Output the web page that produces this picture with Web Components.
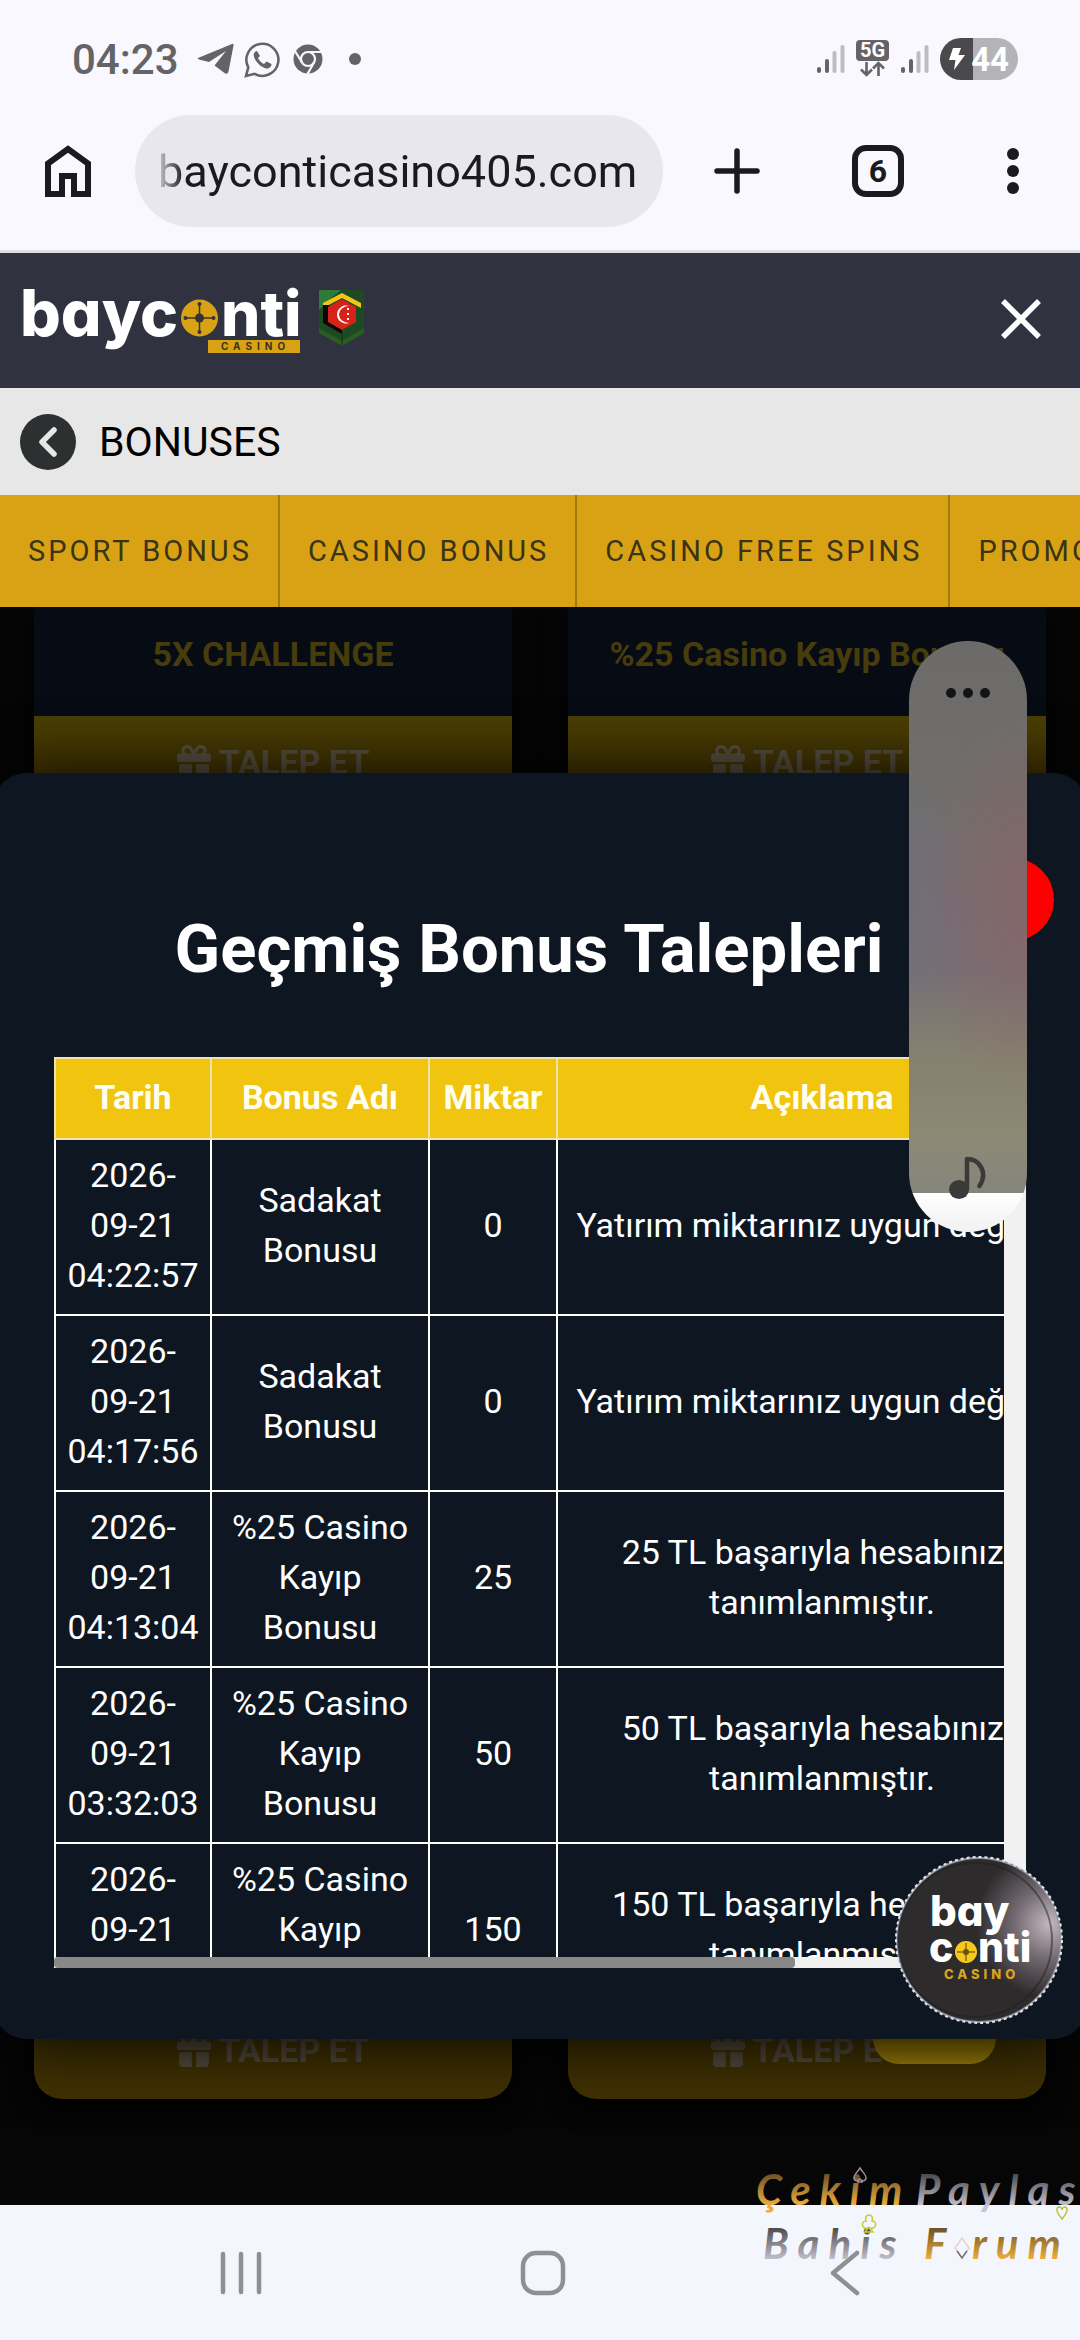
<!DOCTYPE html>
<html lang="tr">
<head>
<meta charset="utf-8">
<meta name="viewport" content="width=device-width, initial-scale=1">
<title>Bonuses</title>
<style>
html { height: 100%; }
body { margin: 0; min-height: 100%; display: flex; flex-direction: column; position: relative; overflow-x: hidden; font-family: Roboto, "Liberation Sans", sans-serif; background: #f4f6fd; }
bonus-page { flex: 1; }
</style>
</head>
<body>
<phone-status></phone-status>
<browser-bar></browser-bar>
<site-header></site-header>
<page-title>BONUSES</page-title>
<bonus-tabs>
  <a href="#sport">SPORT BONUS</a>
  <a href="#casino">CASINO BONUS</a>
  <a href="#spins">CASINO FREE SPINS</a>
  <a href="#promo">PROMOTIONS</a>
</bonus-tabs>
<bonus-page>
  <bonus-card>5X CHALLENGE</bonus-card>
  <bonus-card>%25 Casino Kayıp Bonusu</bonus-card>
  <bonus-card round></bonus-card>
  <bonus-card round></bonus-card>
  <bonus-history slot="modal"></bonus-history>
</bonus-page>
<nav-bar></nav-bar>
<volume-panel></volume-panel>
<chat-badge></chat-badge>
<forum-mark></forum-mark>

<script>
const base = `:host,*{box-sizing:border-box} button{border:0;background:none;padding:0;margin:0;font:inherit;color:inherit;display:flex;align-items:center;justify-content:center} svg{display:block}`;
function define(name, css, html) {
  const tpl = document.createElement('template');
  tpl.innerHTML = `<style>${base}${css}</style>${html}`;
  customElements.define(name, class extends HTMLElement {
    constructor() {
      super();
      this.attachShadow({ mode: 'open' }).append(tpl.content.cloneNode(true));
    }
  });
}

const signal = `<svg width="28" height="30" viewBox="0 0 28 30" stroke-width="4" stroke-linecap="round" fill="none"><path d="M2 25v2M10 17v10" stroke="#646467"/><path d="M17.500 9v18M25.500 3v24" stroke="#bcbcc1"/></svg>`;
define('phone-status', `
:host{display:flex;justify-content:space-between;align-items:center;height:115px;padding:3px 62px 0 72px;background:#f9f8fe;color:#646467}
div{display:flex;align-items:center}
.time{font-size:42px;font-weight:500;margin-right:8px}
.apps{gap:10px}
.sys{gap:11px}
.bat{position:relative;width:78px;height:42px;border-radius:21px;background:linear-gradient(90deg,#4a4a4c 33px,#b4b4b8 33px);color:#fff;font-weight:700;font-size:33px;justify-content:flex-end;padding-right:9px}
.bat svg{margin-right:6px}
`, `
<div class="apps"><span class="time">04:23</span>
<svg width="37" height="32" viewBox="0 0 37 32"><path fill="#646467" d="M1 15 35 1q2-1 1.500 1.500l-5 26q-.8 3.500-4 1.500L17.500 22.500 29 8 12 19 2 16.500Q0 15.800 1 15z"/></svg>
<svg width="37" height="37" viewBox="0 0 37 37"><path fill="none" stroke="#646467" stroke-width="2.600" d="M2 35l2.300-8.600A16 16 0 1 1 10.600 32.800z"/><path fill="#646467" d="M13 10c-2 0-3.500 2-3.300 4.500C10.500 20 17 27 22.500 27.500c2.500.2 5-1.500 5-4.500l-5-2.500-2.500 2.500c-2.500-1-5-3.500-6-6l2-2z"/></svg>
<svg width="34" height="30" viewBox="-2 0 34 30"><circle cx="15" cy="15" r="14.500" fill="#646467"/><g fill="none" stroke="#f9f8fe" stroke-width="2.200"><circle cx="15" cy="15" r="7"/><path d="M15 8h14M9 18.500 2 7M21 18.500 14.500 30"/></g></svg>
<svg width="40" height="14" viewBox="0 0 40 14"><circle cx="20" cy="7" r="6" fill="#646467"/></svg>
</div>
<div class="sys">${signal}
<svg width="34" height="38" viewBox="0 0 34 38"><rect y="0" width="33" height="21" rx="4" fill="#646467"/><text x="16.500" y="17" text-anchor="middle" font-family="Roboto" font-weight="700" font-size="20" fill="#fff">5G</text><path fill="none" stroke="#646467" stroke-width="2.600" d="M10.500 22v13M5 29.500l5.500 5.500 5.500-5.500M22.500 36V23M17 28.500l5.500-5.500 5.500 5.500"/></svg>
${signal}
<div class="bat"><svg width="16" height="22" viewBox="0 0 16 22"><path fill="#fff" d="M4 0h8L9.500 7H16L5 22 6.500 12H0z"/></svg>44</div></div>`);

define('browser-bar', `
:host{display:flex;height:138px;padding-bottom:23px;border-bottom:3px solid #dfdfe6;background:#f9f8fe;color:#1b1b1f}
.home{width:135px} .add{width:148px} .tabs{width:134px} .menu{width:135px}
label{flex:1;min-width:0;display:flex;border-radius:56px;background:#e8e7ed;padding:0 23px}
input{width:100%;border:0;background:none;padding:0;outline:0;font-family:Roboto,sans-serif;font-size:45px;color:#1b1b1f;-webkit-mask-image:linear-gradient(90deg,rgba(0,0,0,.15),#000 26px);mask-image:linear-gradient(90deg,rgba(0,0,0,.15),#000 26px)}
.box{width:52px;height:52px;border:6px solid #1b1b1f;border-radius:14px;display:flex;align-items:center;justify-content:center;font-weight:700;font-size:32px}
`, `
<button class="home" aria-label="Home"><svg width="46" height="52" viewBox="0 0 46 52"><path d="M3 49V18.500L23 4l20 14.500V49H29V31H17v18z" fill="none" stroke="#1b1b1f" stroke-width="6"/></svg></button>
<label><input type="text" aria-label="Address" value="bayconticasino405.com"></label>
<button class="add" aria-label="New tab"><svg width="46" height="46" viewBox="0 0 46 46"><path d="M23 3v40M3 23h40" stroke="#1b1b1f" stroke-width="5.500" stroke-linecap="round"/></svg></button>
<button class="tabs" aria-label="Tabs"><span class="box">6</span></button>
<button class="menu" aria-label="Menu"><svg width="12" height="46" viewBox="0 0 12 46" fill="#1b1b1f"><circle cx="6" cy="6" r="6"/><circle cx="6" cy="23" r="6"/><circle cx="6" cy="40" r="6"/></svg></button>`);

define('site-header', `
:host{display:flex;align-items:center;height:135px;padding:0 36px 4px 21px;background:#31323f}
text{font-family:Inter,Lato,sans-serif;font-weight:800;font-feature-settings:"cv11"}
.logos{display:flex;gap:14px;align-items:center;flex:1}
`, `
<div class="logos">
<svg width="284" height="80" viewBox="0 0 284 80" role="img" aria-label="bayconti casino">
<text x="-1" y="57" font-size="64" fill="#fff">bayc</text>
<text x="200" y="57" font-size="62" fill="#fff">nti</text>
<circle cx="178.500" cy="39" r="18.500" fill="#d9a214"/>
<path d="M178.500 24v30M164 39h30" stroke="#3c3420" stroke-width="1.500"/><g fill="#33333a"><circle cx="178.500" cy="39" r="4.500"/><circle cx="178.500" cy="25" r="2"/><circle cx="178.500" cy="53" r="2"/><circle cx="164.500" cy="39" r="2"/><circle cx="192.500" cy="39" r="2"/></g>
<rect x="187" y="61" width="92" height="13" fill="#d9a214"/>
<text x="200" y="71" font-size="10" letter-spacing="5" fill="#3b341b" style="font-weight:700">CASINO</text></svg>
<svg width="46" height="62" viewBox="0 0 46 62"><path d="M0 2h45v43L23 58 0 45z" fill="#1d4a22"/><path d="M0 2h22L10 12 0 22z" fill="#2f7a38"/><path d="M0 40l23 13 22-13v5L23 58 0 45z" fill="#2c5c23"/><path d="M4 15 23 5l19 10v5L23 10 4 20z" fill="#f2c617"/><path d="M4 17v18l19 11V36L10 29V17z" fill="#080808"/><path d="M9 19 23 11l14 8v15l-14 8-14-8z" fill="#d62218"/><path d="M30 18a9 9 0 1 0 0 17 10 8.500 0 1 1 0-17z" fill="#fff"/><path d="M29 20v13" stroke="#fff" stroke-width="2" stroke-dasharray="2 3"/><path d="M23 45v13" stroke="#12300f"/></svg>
</div>
<button aria-label="Close"><svg width="46" height="46" viewBox="0 0 46 46"><path d="M5 5l36 36M41 5 5 41" stroke="#fff" stroke-width="5.500"/></svg></button>`);

define('page-title', `
:host{display:flex;align-items:center;gap:23px;height:107px;padding-left:20px;background:#e7e7e7;color:#000}
h1{margin:0;font-size:41px;font-weight:400}
`, `<button aria-label="Back"><svg width="56" height="56" viewBox="0 0 56 56"><circle cx="28" cy="28" r="28" fill="#2d3030"/><path d="M34 16 22 28l12 12" fill="none" stroke="#e7e7e7" stroke-width="5.500" stroke-linecap="round" stroke-linejoin="round"/></svg></button><h1><slot></slot></h1>`);

define('bonus-tabs', `
:host{display:block;overflow:hidden;height:112px;background:#d9a214}
nav{display:flex;height:100%;width:max-content}
::slotted(a){display:flex;align-items:center;padding:0 26px 0 28px;border-right:2px solid #a47a10;color:#3a3414;text-decoration:none;font-size:29px;letter-spacing:3px;white-space:nowrap}
`, `<nav><slot></slot></nav>`);

define('bonus-page', `
:host{display:flex;flex-direction:column;position:relative;overflow:hidden;background:#060606}
.grid{flex:1;display:grid;grid-template-columns:1fr 1fr;grid-template-rows:204px 1fr;gap:56px;padding:0 34px 106px}
.pill{position:absolute;right:84px;bottom:141px;width:123px;height:84px;border-radius:26px;background:linear-gradient(#9a7600 60%,#a88c0a)}
::slotted(bonus-history){position:absolute;top:166px;bottom:166px;left:-6px;right:-6px}
`, `<div class="grid"><slot></slot></div><div class="pill"></div><slot name="modal"></slot>`);

define('bonus-card', `
:host{display:flex;flex-direction:column;background:#070b13;box-shadow:0 10px 24px #000}
:host([round]){border-radius:28px;overflow:hidden}
h3{flex:1;margin:0;display:flex;align-items:center;justify-content:center;padding-bottom:16px;font-size:34px;font-weight:700;color:#463c0c}
button{height:95px;padding-bottom:3px;gap:8px;background:linear-gradient(#4a3e04,#423103);color:#5a5142;font-size:34px;font-weight:700}
`, `<h3><slot></slot></h3><button><svg width="34" height="34" viewBox="0 0 512 512"><path fill="currentColor" d="M190.500 68.800L225.300 128H152c-22.100 0-40-17.900-40-40s17.900-40 40-40h2.200c14.900 0 28.800 7.900 36.300 20.800zM64 88c0 14.400 3.500 28 9.600 40H32c-17.700 0-32 14.300-32 32v64c0 17.700 14.300 32 32 32H480c17.700 0 32-14.300 32-32V160c0-17.700-14.300-32-32-32H438.400c6.100-12 9.600-25.600 9.600-40c0-48.600-39.400-88-88-88h-2.200c-31.900 0-61.500 16.900-77.700 44.400L256 85.500l-24.100-41C215.700 16.900 186.100 0 154.200 0H152C103.400 0 64 39.400 64 88zm336 0c0 22.100-17.900 40-40 40H286.700l34.800-59.200C329.100 55.900 342.900 48 357.800 48H360c22.100 0 40 17.900 40 40zM32 288V464c0 26.500 21.500 48 48 48H224V288H32zM288 512H432c26.500 0 48-21.500 48-48V288H288V512z"/></svg>TALEP ET</button>`);

const rows = [
  ['2026-09-21 04:22:57', 'Sadakat Bonusu', '0', 'Yatırım miktarınız uygun değildir.'],
  ['2026-09-21 04:17:56', 'Sadakat Bonusu', '0', 'Yatırım miktarınız uygun değildir.'],
  ['2026-09-21 04:13:04', '%25 Casino Kayıp Bonusu', '25', '25 TL başarıyla hesabınıza tanımlanmıştır.'],
  ['2026-09-21 03:32:03', '%25 Casino Kayıp Bonusu', '50', '50 TL başarıyla hesabınıza tanımlanmıştır.'],
  ['2026-09-21 03:10:26', '%25 Casino Kayıp Bonusu', '150', '150 TL başarıyla hesabınıza tanımlanmıştır.']
];
define('bonus-history', `
:host{display:flex;flex-direction:column;padding:136px 60px 71px;border-radius:32px;background:#0d1621;color:#fff;box-shadow:0 6px 70px #000}
.scroller{flex:1;min-height:0;display:grid;grid-template-columns:minmax(0,1fr) 22px;grid-template-rows:minmax(0,1fr) 11px}
.view{overflow:hidden}
h2{margin:0 0 68px;text-align:center;font-size:67px;line-height:80px;font-weight:700}
table{width:1034px;table-layout:fixed;border-collapse:collapse;font-size:34px;line-height:50px;text-align:center}
th,td{border:2px solid #fff;padding:10px 11px 14px;vertical-align:middle}
th{background:#f1c40f;color:#fffff0;border-color:#f0e3b0;padding:13px 0 16px}
td:last-child{padding:10px 16px 14px}
.v{background:#f1f1f1}
.h{background:#f1f1f1}
.h i{display:block;width:78%;height:100%;border-radius:4px;background:#888}
.x{position:absolute;top:85px;right:32px;width:83px;height:83px;border-radius:50%;background:#f00}
`, `
<div class="scroller"><div class="view"><h2>Geçmiş Bonus Talepleri</h2>
<table><colgroup><col style="width:156px"><col style="width:218px"><col style="width:128px"><col></colgroup>
<thead><tr><th>Tarih</th><th>Bonus Adı</th><th>Miktar</th><th>Açıklama</th></tr></thead>
<tbody>${rows.map(r => `<tr>${r.map(c => `<td>${c}</td>`).join('')}</tr>`).join('')}</tbody></table></div>
<div class="v"></div><div class="h"><i></i></div></div>
<button class="x" aria-label="Kapat"></button>`);

define('nav-bar', `
:host{display:grid;grid-template-columns:repeat(3,1fr);height:135px;padding:0 84px 0 90px;background:#f4f6fd}
svg{fill:none;stroke:#8e9093;stroke-width:4.500;stroke-linecap:round;stroke-linejoin:round}
`, `
<button aria-label="Recent apps"><svg width="44" height="44" viewBox="0 0 44 44"><path d="M4 3v38M22 3v38M40 3v38"/></svg></button>
<button aria-label="Home"><svg width="46" height="46" viewBox="0 0 46 46"><rect x="3" y="3" width="40" height="40" rx="13"/></svg></button>
<button aria-label="Back"><svg width="32" height="46" viewBox="0 0 32 46"><path d="M28 3 4 23l24 20"/></svg></button>`);

define('volume-panel', `
:host{position:absolute;top:641px;right:53px;width:118px;height:591px;border-radius:59px;overflow:hidden;display:flex;flex-direction:column;align-items:center;justify-content:space-between;padding:46px 0 32px;
background:radial-gradient(ellipse 110px 190px at 118px 258px,rgba(145,95,100,.6),transparent),radial-gradient(ellipse 80px 120px at 0 250px,rgba(112,108,130,.5),transparent),linear-gradient(#6c6b69 0,#706f6c 30%,#757075 56%,#85806f 70%,#8c8975 84%,#85857c 552px,#fff 552px,#f1f1f1)}
`, `
<svg width="44" height="12" viewBox="0 0 44 12" fill="#141414"><circle cx="5" cy="6" r="5"/><circle cx="22" cy="6" r="5"/><circle cx="39" cy="6" r="5"/></svg>
<svg width="40" height="44" viewBox="0 0 40 44"><ellipse cx="11" cy="33.500" rx="10" ry="9.500" fill="#3b3a38"/><path d="M19 33V3c13 0 21 14 12.500 27" fill="none" stroke="#3b3a38" stroke-width="4.500" stroke-linecap="round" stroke-linejoin="round"/></svg>`);

define('chat-badge', `
:host{position:absolute;top:1856px;right:17px;width:168px;height:168px}
text{font-family:Inter,Lato,sans-serif;font-weight:800;font-feature-settings:"cv11"}
button{display:block}
`, `
<button aria-label="bayconti"><svg width="168" height="168" viewBox="0 0 168 168"><defs><radialGradient id="s" cx=".93" cy=".4" r=".45"><stop offset="0" stop-color="#c4b8bf"/><stop offset=".5" stop-color="#6f676d"/><stop offset="1" stop-color="#2e2b2d"/></radialGradient></defs>
<circle cx="84" cy="84" r="82" fill="url(#s)" stroke="#8f949e" stroke-width="2"/><circle cx="84" cy="84" r="83" fill="none" stroke="#e3e6ec" stroke-width="2" stroke-dasharray="3 3"/>
<circle cx="80" cy="84" r="77" fill="none" stroke="#201d1f" stroke-opacity=".5" stroke-width="2"/>
<text x="35" y="70" font-size="42" fill="#fff">bay</text><text x="34" y="106" font-size="41" fill="#fff">c</text><text x="83" y="106" font-size="41" fill="#fff">nti</text>
<circle cx="71" cy="96" r="11" fill="#f4cb1d"/><path d="M71 87v18M62 96h18" stroke="#8a6a10" stroke-width="1.500"/><circle cx="71" cy="96" r="3" fill="#6b5210"/>
<text x="49" y="123" font-size="13" letter-spacing="4" fill="#d9a41c">CASINO</text></svg></button>`);

define('forum-mark', `
:host{display:block;position:absolute;top:2160px;right:0;width:330px;pointer-events:none}
text{font-family:Lato,sans-serif;font-style:italic;font-weight:700;letter-spacing:9px}
`, `
<svg width="330" height="110" viewBox="0 0 330 110"><defs>
<linearGradient id="g" x1="0" y1="0" x2="0" y2="1"><stop offset=".2" stop-color="#6a5126"/><stop offset=".8" stop-color="#e9ab3c"/></linearGradient>
<linearGradient id="p" x1="0" y1="0" x2="0" y2="1"><stop offset=".2" stop-color="#4a4a4c"/><stop offset=".85" stop-color="#c9c4d0"/></linearGradient></defs>
<text x="6" y="45" font-size="42" fill="url(#g)">Çekim</text><text x="166" y="45" font-size="42" fill="url(#p)">Paylas</text>
<text x="13" y="99" font-size="42" fill="url(#p)">Bahis</text><text x="174" y="99" font-size="42" fill="url(#g)">F</text><text x="222" y="99" font-size="42" fill="url(#g)">rum</text>
<g fill="none" stroke-width="1.500"><path d="M110 8c-3 5-6 6-6 10 0 3 4 4 6 1 2 3 6 2 6-1 0-4-3-5-6-10zM107 22h6" stroke="#9a8f94"/><path d="M119 72h-4l3-4c-6 2-8-7-2-7-3-8 9-8 6 0 6 0 4 9-2 7l3 4z" stroke="#c9cc2e"/><path d="M312 59c-5-6-7-11-3-12 2 0 3 2 3 3 0-1 1-3 3-3 4 1 2 6-3 12z" stroke="#b9bf3a"/><path d="M212 78l7 10-7 10-7-10z" stroke="#eccfd0"/><path d="M207 91l5 7 5-7" stroke="#6d7378"/></g></svg>`);
</script>
</body>
</html>
